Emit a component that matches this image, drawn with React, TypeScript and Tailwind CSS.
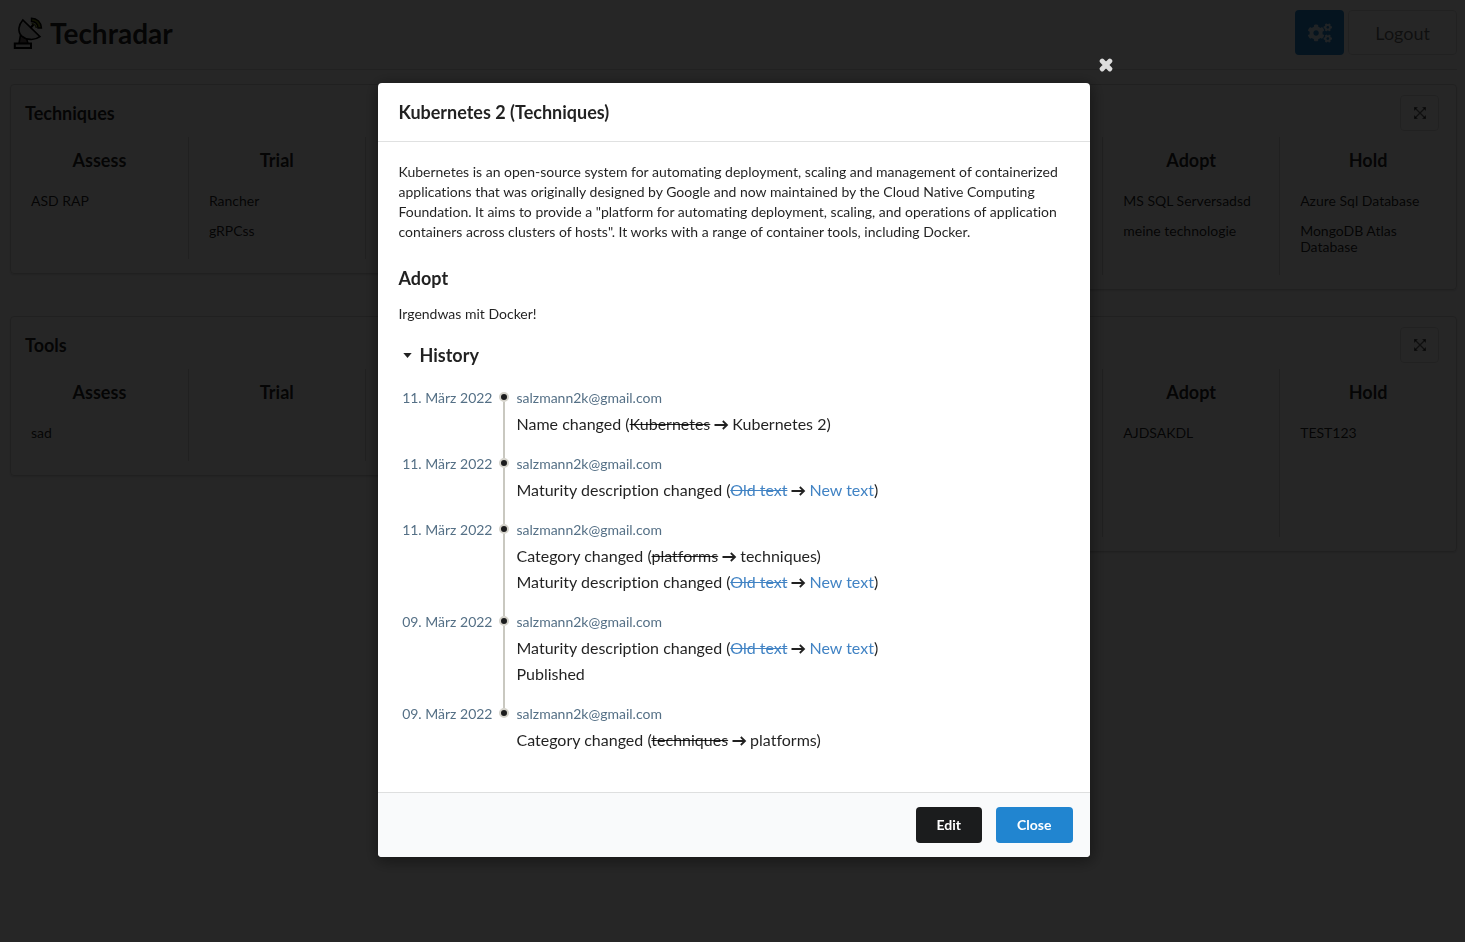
import type { ReactNode } from "react";
import { FaCogs, FaTimes } from "react-icons/fa";

type Stage = { name?: string; items: string[] };

type Quadrant = { id: string; title?: string; tall?: boolean; stages: Stage[] };

const quadrants: Quadrant[] = [
  {
    id: "techniques",
    title: "Techniques",
    stages: [
      { name: "Assess", items: ["ASD RAP"] },
      { name: "Trial", items: ["Rancher", "gRPCss"] },
      { items: [] },
      { items: [] },
    ],
  },
  {
    id: "platforms",
    stages: [
      { items: [] },
      { items: [] },
      { name: "Adopt", items: ["MS SQL Serversadsd", "meine technologie"] },
      { name: "Hold", items: ["Azure Sql Database", "MongoDB Atlas Database"] },
    ],
  },
  {
    id: "tools",
    title: "Tools",
    stages: [
      { name: "Assess", items: ["sad"] },
      { name: "Trial", items: [] },
      { items: [] },
      { items: [] },
    ],
  },
  {
    id: "languages",
    tall: true,
    stages: [
      { items: [] },
      { items: [] },
      { name: "Adopt", items: ["AJDSAKDL"] },
      { name: "Hold", items: ["TEST123"] },
    ],
  },
];

function RadarLogo() {
  return (
    <svg viewBox="0 0 30 32" className="h-8 w-[30px]" fill="none" stroke="#000" strokeWidth="1.6" aria-hidden="true">
      <path d="M18.500 1.200c5.500 0 9.800 4 10 9.800h-3.500c-.2-3.800-2.700-6.300-6.500-6.500z" fill="#7a8a1a" strokeWidth="1.400" />
      <path d="M18.500 6.500c3 .2 4.500 1.700 4.800 4.500" stroke="#5b6a10" />
      <path d="M6 26.500 7.500 18l6 3.500 1.500 5z" fill="#6f6262" />
      <path d="M9.800 3C5.500 8 4.300 14.500 8.500 18.800c4.500 4.300 13 5 18.500.9z" fill="#ddd" />
      <path d="m17.500 11 3-3.500" strokeWidth="2" />
      <path d="M1.800 26.500H18V31H1.800z" fill="#ddd" strokeWidth="2" />
    </svg>
  );
}

function ExpandIcon() {
  return (
    <svg viewBox="0 0 14 14" className="size-[14px]" fill="currentColor" aria-hidden="true">
      <path d="M1 1h4L1 5zM13 1v4L9 1zM1 13V9l4 4zM13 13H9l4-4z" />
      <path d="m2 2 10 10M12 2 2 12" stroke="currentColor" strokeWidth="1.300" />
    </svg>
  );
}

function QuadrantCard({ quadrant }: { quadrant: Quadrant }) {
  return (
    <section className="rounded border border-[#d4d4d5] pb-[14px] shadow-[0_1px_2px_0_rgba(34,36,38,0.15)]">
      <div className="flex h-[52px] items-start justify-between pt-[10px] pr-[17px] pl-[14px]">
        <h2 className="text-lg leading-9 font-bold">{quadrant.title}</h2>
        <button
          type="button"
          aria-label="Expand"
          className="flex h-9 w-[39px] items-center justify-center rounded border border-[#dcdcdd] text-black/60"
        >
          <ExpandIcon />
        </button>
      </div>
      <div className={`grid grid-cols-4 ${quadrant.tall ? "min-h-[168px]" : ""}`}>
        {quadrant.stages.map((stage, index) => (
          <div key={index} className="border-l border-[#d4d4d5] px-5 pt-[11px] pb-[6px] first:border-l-0">
            <h3 className="h-6 text-center text-lg leading-6 font-bold">{stage.name}</h3>
            <ul className="mt-[21px]">
              {stage.items.map((item) => (
                <li key={item} className="mb-[14px] text-sm leading-4">
                  {item}
                </li>
              ))}
            </ul>
          </div>
        ))}
      </div>
    </section>
  );
}

function Arrow() {
  return (
    <svg
      viewBox="0 0 16 16"
      className="mx-[3px] inline size-4 align-[-3px]"
      fill="none"
      stroke="currentColor"
      strokeWidth="1.800"
      aria-hidden="true"
    >
      <path d="M1.500 8h12M9.800 4 14 8l-4.200 4" />
    </svg>
  );
}

function Renamed({ label, from, to }: { label: string; from: string; to: string }) {
  return (
    <>
      {label} (<s>{from}</s>
      <Arrow />
      {to})
    </>
  );
}

function DescriptionChanged() {
  return (
    <>
      Maturity description changed (
      <a href="#old" className="text-[#4183c4] line-through">
        Old text
      </a>
      <Arrow />
      <a href="#new" className="text-[#4183c4]">
        New text
      </a>
      )
    </>
  );
}

const author = "salzmann2k@gmail.com";

const history: { date: string; changes: ReactNode[] }[] = [
  { date: "11. März 2022", changes: [<Renamed label="Name changed" from="Kubernetes" to="Kubernetes 2" />] },
  { date: "11. März 2022", changes: [<DescriptionChanged />] },
  {
    date: "11. März 2022",
    changes: [<Renamed label="Category changed" from="platforms" to="techniques" />, <DescriptionChanged />],
  },
  { date: "09. März 2022", changes: [<DescriptionChanged />, "Published"] },
  { date: "09. März 2022", changes: [<Renamed label="Category changed" from="techniques" to="platforms" />] },
];

function Timeline() {
  return (
    <ol className="mt-[21px]">
      {history.map((entry, index) => (
        <li key={index} className="group flex">
          <time className="w-[94px] text-right text-sm leading-5 text-[#557086]">{entry.date}</time>
          <div className="-mb-1 flex w-[22px] flex-col items-center pt-1 group-last:mb-0">
            <span className="size-[10px] rounded-full border-2 border-[#d5d3cb] bg-[#1b1c1d]" />
            <span className="w-[2px] flex-1 bg-[#c9c8c0] group-last:hidden" />
          </div>
          <div className="flex-1 pb-[17px] pl-[2px]">
            <p className="text-sm leading-5 text-[#557086]">{author}</p>
            <ul className="mt-[3px]">
              {entry.changes.map((change, i) => (
                <li key={i} className="text-base leading-[26px]">
                  {change}
                </li>
              ))}
            </ul>
          </div>
        </li>
      ))}
    </ol>
  );
}

function DetailsModal() {
  return (
    <div className="fixed inset-0 flex items-center justify-center bg-black/85 pb-[2px] pl-[2px]">
      <div
        role="dialog"
        aria-modal="true"
        aria-labelledby="details-title"
        className="relative w-full max-w-[712px] rounded bg-white shadow-[1px_3px_15px_2px_rgba(0,0,0,0.4)]"
      >
        <button type="button" aria-label="Close dialog" className="absolute -top-[26px] -right-6 text-[#dcdcdc]">
          <FaTimes className="size-4" strokeWidth={60} stroke="currentColor" />
        </button>
        <header className="border-b border-[#e0e1e1] px-[21px] py-[17px]">
          <h2 id="details-title" className="text-lg leading-6 font-bold">
            Kubernetes 2 (Techniques)
          </h2>
        </header>
        <div className="px-[21px] pt-5 pb-[22px]">
          <p className="text-sm leading-5">
            Kubernetes is an open-source system for automating deployment, scaling and management of containerized
            applications that was originally designed by Google and now maintained by the Cloud Native Computing
            Foundation. It aims to provide a "platform for automating deployment, scaling, and operations of application
            containers across clusters of hosts". It works with a range of container tools, including Docker.
          </p>
          <h3 className="mt-6 text-lg leading-6 font-bold">Adopt</h3>
          <p className="mt-[14px] text-sm leading-5">Irgendwas mit Docker!</p>
          <button
            type="button"
            aria-expanded="true"
            className="mt-[19px] flex items-center gap-2 text-lg leading-6 font-bold"
          >
            <svg viewBox="0 0 10 6" className="ml-1 h-[5px] w-[9px]" fill="currentColor" aria-hidden="true">
              <path d="M0 0h10L5 6z" />
            </svg>
            History
          </button>
          <Timeline />
        </div>
        <footer className="flex justify-end gap-[14px] rounded-b border-t border-[#dedfdf] bg-[#f9fafb] py-[14px] pr-[17px] pl-[14px] text-sm leading-5 font-bold text-white">
          <button type="button" className="rounded bg-[#1b1c1d] px-[21px] py-2">
            Edit
          </button>
          <button type="button" className="rounded bg-[#2185d0] px-[21px] py-2">
            Close
          </button>
        </footer>
      </div>
    </div>
  );
}

export default function App() {
  return (
    <div className="min-h-screen bg-white pr-2 pl-[10px] font-[Lato,sans-serif] text-black/87 [font-variant-ligatures:none]">
      <header className="flex items-start justify-between border-b border-[#dededf] pt-[10px] pb-[14px]">
        <h1 className="flex items-center gap-[7px] pt-[7px] pl-[3px] text-[28px] leading-8 font-bold">
          <RadarLogo />
          Techradar
        </h1>
        <div className="flex gap-1 text-lg">
          <button
            type="button"
            aria-label="Settings"
            className="flex h-[45px] w-[49px] items-center justify-center rounded bg-[#2185d0] text-white/80"
          >
            <FaCogs className="h-6 w-6" />
          </button>
          <button type="button" className="h-[45px] rounded border border-[#dededf] px-[26px] text-black/60">
            Logout
          </button>
        </div>
      </header>
      <main className="mt-[14px] grid grid-cols-2 items-start gap-x-7 gap-y-[26px]">
        {quadrants.map((quadrant) => (
          <QuadrantCard key={quadrant.id} quadrant={quadrant} />
        ))}
      </main>
      <DetailsModal />
    </div>
  );
}
